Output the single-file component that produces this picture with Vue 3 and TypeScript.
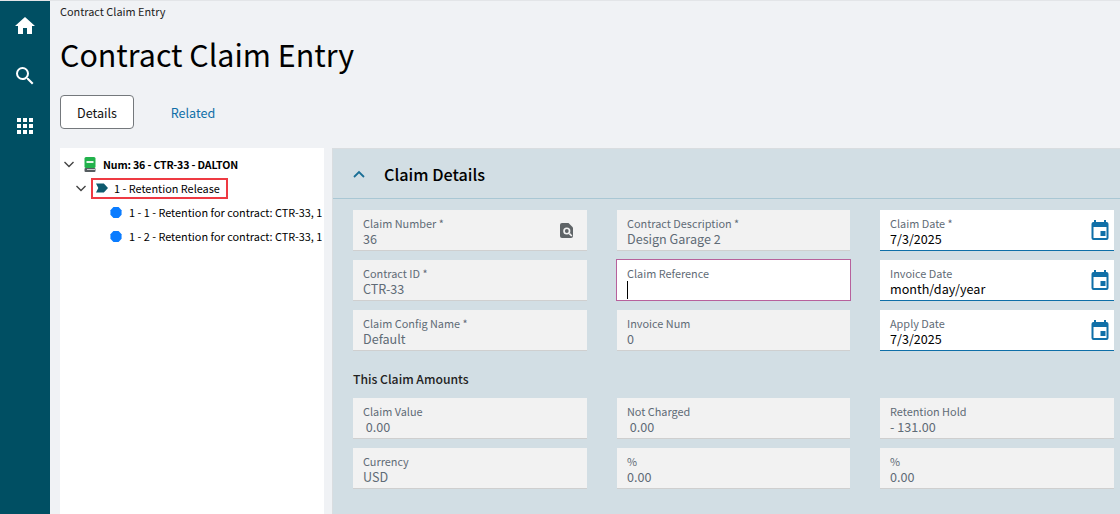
<script setup lang="ts">
interface Field {
  label: string;
  value: string;
  kind?: "lookup" | "date" | "focus";
}

const detailColumns: Field[][] = [
  [
    { label: "Claim Number *", value: "36", kind: "lookup" },
    { label: "Contract ID *", value: "CTR-33" },
    { label: "Claim Config Name *", value: "Default" },
  ],
  [
    { label: "Contract Description *", value: "Design Garage 2" },
    { label: "Claim Reference", value: "", kind: "focus" },
    { label: "Invoice Num", value: "0" },
  ],
  [
    { label: "Claim Date *", value: "7/3/2025", kind: "date" },
    { label: "Invoice Date", value: "month/day/year", kind: "date" },
    { label: "Apply Date", value: "7/3/2025", kind: "date" },
  ],
];

const amountColumns: Field[][] = [
  [
    { label: "Claim Value", value: "\u00a00.00" },
    { label: "Currency", value: "USD" },
  ],
  [
    { label: "Not Charged", value: "\u00a00.00" },
    { label: "%", value: "0.00" },
  ],
  [
    { label: "Retention Hold", value: "- 131.00" },
    { label: "%", value: "0.00" },
  ],
];
</script>

<template>
  <div class="page">
    <nav class="rail">
      <svg class="rail-icon" viewBox="0 0 24 24"><path d="M10 20v-6h4v6h5v-8h3L12 3 2 12h3v8z" /></svg>
      <svg class="rail-icon" viewBox="0 0 24 24"><path d="M15.5 14h-.79l-.28-.27A6.47 6.47 0 0 0 16 9.5 6.5 6.5 0 1 0 9.5 16c1.61 0 3.09-.59 4.23-1.57l.27.28v.79l5 4.99L20.49 19l-4.99-5zm-6 0C7.01 14 5 11.99 5 9.5S7.01 5 9.5 5 14 7.01 14 9.5 11.99 14 9.5 14z" /></svg>
      <svg class="rail-icon" viewBox="0 0 24 24"><path d="M4 8h4V4H4v4zm6 12h4v-4h-4v4zm-6 0h4v-4H4v4zm0-6h4v-4H4v4zm6 0h4v-4h-4v4zm6-10v4h4V4h-4zm-6 4h4V4h-4v4zm6 6h4v-4h-4v4zm0 6h4v-4h-4v4z" /></svg>
    </nav>

    <main class="content">
      <div class="crumb">Contract Claim Entry</div>
      <h1 class="title">Contract Claim Entry</h1>
      <div class="tabs">
        <button class="tab active">Details</button>
        <button class="tab">Related</button>
      </div>

      <div class="body">
        <aside class="tree">
          <div class="tree-row root">
            <svg class="chev" viewBox="0 0 12 12"><path d="M1.5 4 6 8.5 10.5 4" /></svg>
            <svg class="book" viewBox="0 0 12 15">
              <rect x="0.5" y="0" width="11" height="11" rx="1.5" fill="#22b24c" />
              <rect x="2.5" y="4" width="7" height="2" fill="#e8f8ec" />
              <rect x="0.5" y="11" width="11" height="4" rx="1" fill="#565c60" />
              <rect x="3" y="12" width="8" height="1" fill="#c9cdd0" />
            </svg>
            <span>Num: 36 - CTR-33 - DALTON</span>
          </div>
          <div class="tree-row level-1">
            <svg class="chev" viewBox="0 0 12 12"><path d="M1.5 4 6 8.5 10.5 4" /></svg>
            <div class="selected">
              <svg class="tag" viewBox="0 0 13 10"><path d="M0 0h8.5L13 5 8.5 10H0l2.5-5z" /></svg>
              <span>1 - Retention Release</span>
            </div>
          </div>
          <div class="tree-row level-2">
            <svg class="hex" viewBox="0 0 14 14"><path d="M4 .5h6L13.5 4.5v5L10 13.5H4L.5 9.5v-5z" /></svg>
            <span class="clip">1 - 1 - Retention for contract: CTR-33, 1-</span>
          </div>
          <div class="tree-row level-2">
            <svg class="hex" viewBox="0 0 14 14"><path d="M4 .5h6L13.5 4.5v5L10 13.5H4L.5 9.5v-5z" /></svg>
            <span class="clip">1 - 2 - Retention for contract: CTR-33, 1-</span>
          </div>
        </aside>

        <section class="panel">
          <header class="panel-head">
            <svg class="collapse" viewBox="0 0 14 10"><path d="M2 8 7 3l5 5" /></svg>
            <h2>Claim Details</h2>
          </header>

          <div class="panel-body">
            <div class="grid">
              <div v-for="(col, c) in detailColumns" :key="c" class="col">
                <div
                  v-for="field in col"
                  :key="field.label"
                  class="field"
                  :class="field.kind"
                >
                  <label>{{ field.label }}</label>
                  <div class="value">
                    {{ field.value }}<span v-if="field.kind === 'focus'" class="caret"></span>
                  </div>
                  <svg v-if="field.kind === 'lookup'" class="lookup-icon" viewBox="0 0 13 15">
                    <path d="M2 0h6.5L13 4.5V13a2 2 0 0 1-2 2H2a2 2 0 0 1-2-2V2a2 2 0 0 1 2-2z" fill="#5f6467" />
                    <circle cx="6.8" cy="8" r="3.6" fill="#f2f2f2" />
                    <circle cx="6.8" cy="8" r="1.9" fill="#5f6467" />
                    <path d="m9.4 10.6 2.4 2.4" stroke="#f2f2f2" stroke-width="1.6" />
                  </svg>
                  <svg v-if="field.kind === 'date'" class="date-icon" viewBox="0 0 18 20">
                    <path d="M15.5 2H15V0h-2v2H5V0H3v2h-.5A2 2 0 0 0 .5 4v14a2 2 0 0 0 2 2h13a2 2 0 0 0 2-2V4a2 2 0 0 0-2-2zm0 16h-13V7h13v11z" />
                    <rect x="9.5" y="11" width="5" height="5" />
                  </svg>
                </div>
              </div>
            </div>

            <h3>This Claim Amounts</h3>

            <div class="grid">
              <div v-for="(col, c) in amountColumns" :key="c" class="col">
                <div v-for="field in col" :key="field.label" class="field">
                  <label>{{ field.label }}</label>
                  <div class="value">{{ field.value }}</div>
                </div>
              </div>
            </div>
          </div>
        </section>
      </div>
    </main>
  </div>
</template>

<style>
html,
body {
  margin: 0;
  overflow: hidden;
}
</style>

<style scoped>
.page {
  display: flex;
  width: 1120px;
  height: 514px;
  box-sizing: border-box;
  overflow: hidden;
  border-top: 1px solid #e3e5e8;
  background: #f0f2f5;
  font-family: "Noto Sans CJK SC", "Open Sans", sans-serif;
  color: #000;
}

.rail {
  flex: none;
  width: 50px;
  padding-top: 13px;
  background: #004f63;
  display: flex;
  flex-direction: column;
  align-items: center;
  gap: 26px;
  box-sizing: border-box;
}

.rail-icon {
  width: 24px;
  height: 24px;
  fill: #fff;
}

.content {
  flex: 1;
  min-width: 0;
  display: flex;
  flex-direction: column;
}

.crumb {
  margin: 3px 0 0 10px;
  font-size: 10.9px;
  line-height: 15px;
  color: #222;
}

.title {
  margin: 13px 0 0 10px;
  font-size: 30.4px;
  line-height: 44px;
  font-weight: 400;
}

.tabs {
  display: flex;
  gap: 4px;
  margin: 19px 0 0 10px;
}

.tab {
  width: 74px;
  height: 34px;
  padding: 0;
  border: 1px solid transparent;
  border-radius: 4px;
  background: none;
  font: inherit;
  font-size: 12.6px;
  color: #0f6fa8;
}

.tab.active {
  border-color: #74787c;
  background: #fff;
  color: #111;
}

.tab:not(.active) {
  width: 110px;
}

.body {
  flex: 1;
  min-height: 0;
  display: flex;
  margin-top: 19px;
}

.tree {
  flex: none;
  width: 264px;
  box-sizing: border-box;
  margin-left: 10px;
  padding: 4px 2px 0 0;
  background: #fff;
  font-size: 10.9px;
  overflow: hidden;
}

.tree-row {
  display: flex;
  align-items: center;
  height: 24px;
  white-space: nowrap;
}

.root {
  padding-left: 3px;
  font-size: 10.6px;
  letter-spacing: -0.15px;
  font-weight: 700;
  gap: 7px;
}

.root .book {
  margin-left: 2px;
}

.level-1 {
  padding-left: 15px;
  gap: 4px;
}

.level-2 {
  padding-left: 50px;
  gap: 7px;
}

.chev {
  flex: none;
  width: 12px;
  height: 12px;
  fill: none;
  stroke: #444;
  stroke-width: 1.4;
}

.book {
  flex: none;
  width: 12px;
  height: 15px;
}

.selected {
  display: flex;
  align-items: center;
  gap: 6px;
  height: 21px;
  width: 137px;
  box-sizing: border-box;
  padding-left: 3px;
  border: 2px solid #ee3a43;
}

.tag {
  flex: none;
  width: 12px;
  height: 10px;
  fill: #0e5a6e;
}

.hex {
  flex: none;
  width: 12px;
  height: 13px;
  fill: #0a7cff;
}

.clip {
  min-width: 0;
  overflow: hidden;
}

.panel {
  flex: 1;
  min-width: 0;
  margin-left: 8px;
  background: #d2dee4;
  border-top: 1px solid #d9dde0;
  border-left: 1px solid #d9dde0;
}

.panel-head {
  display: flex;
  align-items: center;
  height: 49px;
  padding-left: 19px;
  gap: 18px;
  border-bottom: 1px solid #a9c7d4;
}

.panel-head h2 {
  margin: 0;
  font-size: 16.2px;
  font-weight: 500;
}

.collapse {
  width: 14px;
  height: 10px;
  fill: none;
  stroke: #1a6f96;
  stroke-width: 1.8;
}

.panel-body {
  padding: 11px 0 0 20px;
}

.grid {
  display: grid;
  grid-template-columns: 234px 233px 234px;
  column-gap: 30px;
}

.col {
  display: flex;
  flex-direction: column;
  gap: 9px;
}

.field {
  position: relative;
  height: 41px;
  box-sizing: border-box;
  padding: 5px 10px 0;
  background: #f2f2f2;
  border-bottom: 1px solid #cfcfcf;
}

.field label {
  display: block;
  font-size: 10.9px;
  line-height: 16px;
  color: #5f6b76;
}

.value {
  font-size: 12.6px;
  line-height: 16px;
  color: #5f6b76;
}

.field.date {
  background: #fff;
  border-bottom: 1px solid #0f6fa8;
}

.field.date .value {
  color: #000;
}

.field.focus {
  height: 42px;
  margin: -1px -1px 0;
  background: #fff;
  border: 1px solid #b7619c;
  padding: 5px 10px 0;
}

.caret {
  display: inline-block;
  width: 1px;
  height: 18px;
  background: #000;
  vertical-align: top;
}

.lookup-icon {
  position: absolute;
  top: 13px;
  right: 14px;
  width: 13px;
  height: 15px;
}

.date-icon {
  position: absolute;
  top: 10px;
  right: 5px;
  width: 18px;
  height: 20px;
  fill: #0f6fa8;
}

.panel-body h3 {
  margin: 19px 0 10px;
  font-size: 12.2px;
  line-height: 18px;
  font-weight: 500;
  color: #222;
}
</style>
